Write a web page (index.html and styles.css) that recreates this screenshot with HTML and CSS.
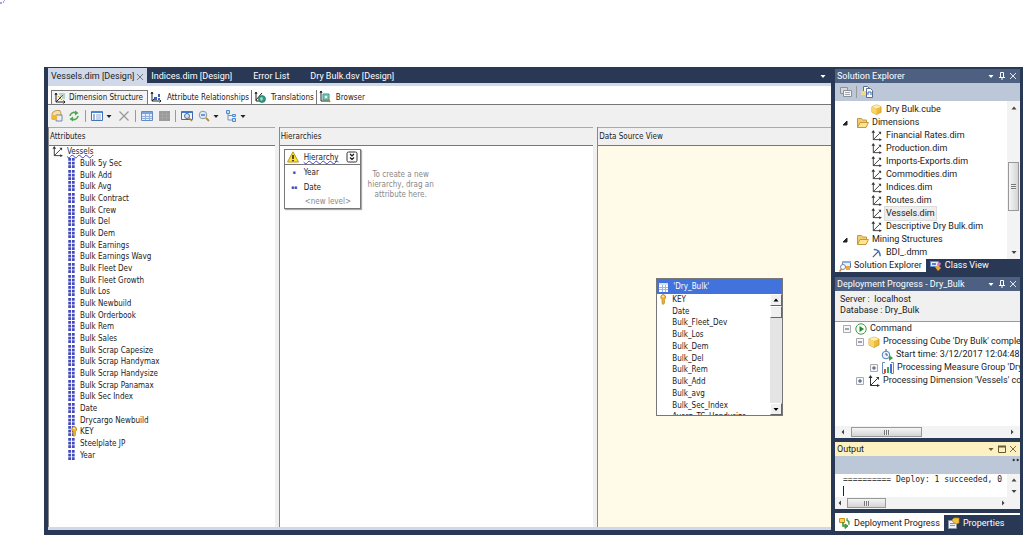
FILE: index.html
```html
<!DOCTYPE html>
<html lang="en">

<head>
    <meta charset="UTF-8">
    <meta name="viewport" content="width=device-width, initial-scale=1.0">
    <title>Vessels.dim [Design]</title>
    <link rel="stylesheet" href="styles.css">
</head>

<body>
    <!-- shared icons -->
    <svg class="sprite" aria-hidden="true">
        <symbol id="i-dim" viewBox="0 0 12 12">
            <path d="M2.500 2v8.500H10M2.500 10.500l7-7" fill="none" stroke="#333" />
            <path d="M2.500 0l2 3h-4zM12 10.500l-3 1.500V9zM11 2v3L8 2z" fill="#333" />
        </symbol>
        <symbol id="i-attr" viewBox="0 0 8 12">
            <path d="M1 0h3v3H1zM5 0h3v3H5zM1 4h3v3H1zM5 4h3v3H5zM1 8h3v3H1zM5 8h3v3H5z" fill="#4248bd" />
        </symbol>
        <symbol id="i-key" viewBox="0 0 8 12">
            <path d="M4 .5a3 3 0 0 1 1.500 5.500v4L4 11.500 3 10V6A3 3 0 0 1 4 .5z" fill="#f2b632" stroke="#b97a12" stroke-width=".8" />
            <circle cx="4" cy="2.500" r="1" fill="#fff3c0" />
        </symbol>
        <symbol id="i-structure" viewBox="0 0 12 12">
            <path d="M2 1v9h9M2 10l7-7M1 3l1-2 1 2M9.500 8.500L11 10l-1.500 1.500" fill="none" stroke="#222" />
            <path d="M5 2h6M6 4h5M8 6h3" stroke="#7fb0a0" />
            <path d="M4 4l4 4" stroke="#c89a40" />
        </symbol>
        <symbol id="i-relations" viewBox="0 0 12 12">
            <path d="M2 1v9h9M2 10l4-4M1 3l1-2 1 2M9.500 8.500L11 10l-1.500 1.500" fill="none" stroke="#222" />
            <path d="M4 6h3v3H4zM8 3h2v3H8zM8 7h2v2H8z" fill="#3c5fc6" />
        </symbol>
        <symbol id="i-translate" viewBox="0 0 12 12">
            <path d="M2 1v9h4M2 9l6-7M1 3l1-2 1 2" fill="none" stroke="#222" />
            <circle cx="8" cy="8" r="3.500" fill="#2e9c8c" stroke="#176455" stroke-width=".6" />
            <path d="M6 7l2-1 1 2-2 2z" fill="#aee3b0" />
        </symbol>
        <symbol id="i-browse" viewBox="0 0 12 12">
            <path d="M2 0v10h9M1 2l1-2 1 2" fill="none" stroke="#222" />
            <path d="M4 3h6v6H4z" fill="#9be0d4" stroke="#2b8f86" />
            <circle cx="7" cy="6" r="2" fill="#d6f6ee" stroke="#2b8f86" stroke-width=".6" />
            <path d="M9 8l2 3" stroke="#b08a20" stroke-width="1.500" />
        </symbol>
        <symbol id="i-process" viewBox="0 0 12 12">
            <path d="M2 2l3-1.500h4l1 3v6H1V4z" fill="#f6dfa0" stroke="#b68e3a" stroke-width=".8" />
            <path d="M5 5h6v6H5z" fill="#e9edf6" stroke="#5a6f9c" stroke-width=".8" />
            <path d="M1 5h5v5H1z" fill="#f2b632" />
        </symbol>
        <symbol id="i-refresh" viewBox="0 0 12 12">
            <path d="M2 6a4 4 0 0 1 6-3M10 6a4 4 0 0 1-6 3" fill="none" stroke="#4fa552" stroke-width="1.600" />
            <path d="M7 .5L10.500 3 7 5.500zM5 6.500L1.500 9 5 11.500z" fill="#4fa552" />
        </symbol>
        <symbol id="i-list" viewBox="0 0 12 12">
            <path d="M.5 1.500h11v9H.5z" fill="#fff" stroke="#4472b8" />
            <path d="M1 1h10v2H1z" fill="#4b86d8" />
            <path d="M2 5h2M2 7h2M2 9h2" stroke="#3467bd" />
            <path d="M5 5h5M5 7h5M5 9h5" stroke="#8fa9d0" />
        </symbol>
        <symbol id="i-x" viewBox="0 0 12 12">
            <path d="M1.500 1.500l9 9M10.500 1.500l-9 9" stroke="currentColor" stroke-width="1.300" />
        </symbol>
        <symbol id="i-grid" viewBox="0 0 12 12">
            <path d="M.5 1.500h11v9H.5z" fill="#e5eefb" stroke="#668bc4" />
            <path d="M1 2h10v2H1z" fill="#79a4df" />
            <path d="M1 6.500h10M1 8.500h10M4.500 4v6M8.500 4v6" stroke="#8fb0de" />
        </symbol>
        <symbol id="i-gray" viewBox="0 0 12 12">
            <path d="M1 1h11v10H1z" fill="#9a9a9a" />
            <path d="M1 4.500h11M1 7.500h11M4.500 1v10M8.500 1v10" stroke="#a4a4a4" />
        </symbol>
        <symbol id="i-find" viewBox="0 0 12 12">
            <path d="M.5 1.500h11v8H.5z" fill="#f3f7fd" stroke="#3f69b5" />
            <path d="M1 1h10v2H1z" fill="#3f78cf" />
            <circle cx="6" cy="6" r="2.500" fill="#cfe4fa" stroke="#5c6b80" />
            <path d="M8 8l3 3" stroke="#b6862a" stroke-width="1.600" />
        </symbol>
        <symbol id="i-zoom" viewBox="0 0 12 12">
            <circle cx="5" cy="5" r="3.800" fill="#dcebfb" stroke="#8a97a8" />
            <path d="M3 5h4" stroke="#3a66ad" stroke-width="1.300" />
            <path d="M8 8l3 3" stroke="#c08a2c" stroke-width="1.800" />
        </symbol>
        <symbol id="i-layout" viewBox="0 0 12 12">
            <path d="M3 3v7h4M3 5.500h4" fill="none" stroke="#6b94c9" />
            <path d="M1.500.5h3v3h-3zM7.500 4.500h3v2h-3zM7.500 8.500h3v3h-3z" fill="#c9e1fb" stroke="#4d8bd0" />
        </symbol>
        <symbol id="i-warn" viewBox="0 0 12 12">
            <path d="M6 .8L11.500 11H.5z" fill="#ffe033" stroke="#b89b10" stroke-linejoin="round" />
            <path d="M6 4v4M6 9v1.300" stroke="#111" stroke-width="1.400" />
        </symbol>
        <symbol id="i-collapse" viewBox="0 0 12 12">
            <rect x="1" y="1" width="10" height="10" rx="1.500" fill="#fff" stroke="#333" />
            <path d="M4 3l2 2 2-2M4 6.500l2 2 2-2" fill="none" stroke="#111" stroke-width="1.200" />
        </symbol>
        <symbol id="i-table" viewBox="0 0 12 12">
            <path d="M2 2h9v9H2z" fill="#fff" />
            <path d="M2 2h9v2H2z" fill="#d5e1fa" />
            <path d="M2 6.500h9M2 8.500h9M5.500 4v7M8.500 4v7" stroke="#9cb5ea" />
        </symbol>
        <symbol id="i-cube" viewBox="0 0 12 12">
            <path d="M6 1l5 2v6l-5 2.500L1 9V3z" fill="#f0bb3a" stroke="#c08a22" stroke-width=".7" />
            <path d="M6 1l5 2-5 2-5-2z" fill="#fff0b0" />
            <path d="M6 5v6.500L1 9V3z" fill="#f9d566" />
        </symbol>
        <symbol id="i-folder" viewBox="0 0 12 12">
            <path d="M.5 10.500v-9h4l1 1.500h4v3" fill="#f2cf6c" stroke="#c29a42" />
            <path d="M.5 10.500l2.500-5h8.500l-2.500 5z" fill="#ffe48e" stroke="#c29a42" />
        </symbol>
        <symbol id="i-mining" viewBox="0 0 12 12">
            <path d="M2 11l7-7" stroke="#555" stroke-width="1.200" />
            <path d="M3 3c3-1 7 2 7 7" fill="none" stroke="#3e75bf" stroke-width="1.600" />
        </symbol>
        <symbol id="i-props" viewBox="0 0 12 12">
            <path d="M.5 1.500h7v6h-7z" fill="#d7d9dd" stroke="#8b9099" />
            <path d="M3.500 4.500h8v6h-8z" fill="#f5f6f8" stroke="#8b9099" />
            <path d="M5 6.500h5M5 8.500h5" stroke="#a3a8b0" />
        </symbol>
        <symbol id="i-files" viewBox="0 0 12 12">
            <path d="M2.500.5h4l2 2v6h-6z" fill="#fff" stroke="#586c8e" />
            <path d="M5.500 2.500h4l2 2v7h-6z" fill="#fff" stroke="#586c8e" />
            <path d="M0 5h5v4H0z" fill="#f5d98a" />
            <path d="M7 9V6h3v3" fill="none" stroke="#2e66b8" />
        </symbol>
        <symbol id="i-solution" viewBox="0 0 12 12">
            <path d="M3.500 1.500h8v6h-8z" fill="#e8eefb" stroke="#5877b4" />
            <path d="M3 1h9v2H3z" fill="#8fadd9" />
            <circle cx="4" cy="7" r="2.500" fill="#fff" stroke="#7385a2" />
            <path d="M2.500 9l-2 2.500" stroke="#c58a28" stroke-width="1.500" />
            <path d="M7 6h4v4H7z" fill="#e8a83c" />
        </symbol>
        <symbol id="i-class" viewBox="0 0 12 12">
            <path d="M.5 1.500h8v5h-8z" fill="#e4edff" stroke="#6d8bd0" />
            <path d="M2 4h4" stroke="#2f5dc4" stroke-width="1.500" />
            <path d="M5 7l3-2 3 3-3 3z" fill="#f3a53c" />
            <path d="M8 2l3 1-1 3-3-1z" fill="#d777c9" />
        </symbol>
        <symbol id="i-play" viewBox="0 0 12 12">
            <circle cx="6" cy="6" r="5.200" fill="#fff" stroke="#3f9a42" />
            <path d="M4.500 3l4.500 3-4.500 3z" fill="#208a2c" />
        </symbol>
        <symbol id="i-time" viewBox="0 0 12 12">
            <circle cx="5" cy="6" r="3.800" fill="#eaf3ff" stroke="#4c80bb" />
            <path d="M5 4v2h2M4 1h2" fill="none" stroke="#345a8c" />
            <path d="M8 6l4 3-4 3z" fill="#37a33e" />
        </symbol>
        <symbol id="i-measure" viewBox="0 0 12 12">
            <path d="M3 .5H.5v11H3M9 .5h2.500v11H9" fill="none" stroke="#6e8cba" />
            <path d="M2 7h2v4H2z" fill="#db4f3b" />
            <path d="M5 5h2v6H5z" fill="#47a94a" />
            <path d="M8 2h2v9H8z" fill="#3c72d2" />
        </symbol>
        <symbol id="i-deploy" viewBox="0 0 12 12">
            <path d="M.5 1.500h5v4h-5z" fill="#ffd45c" stroke="#d38f1b" />
            <path d="M4 5v4h3" fill="none" stroke="#35943a" stroke-width="1.500" />
            <path d="M6 7l3 2-3 2.500zM8 1v3h2v4" fill="#4aa84c" stroke="#35943a" />
        </symbol>
        <symbol id="i-hand" viewBox="0 0 12 12">
            <path d="M.5 3.500h8v8h-8z" fill="#eef1f7" stroke="#8a94a8" />
            <path d="M2 6.500h5M2 8.500h5" stroke="#7a8db5" />
            <path d="M4 3l2-2h5v5l-3 1-3-2z" fill="#f5c33b" stroke="#b78821" stroke-width=".7" />
        </symbol>
        <symbol id="i-pin" viewBox="0 0 8 8">
            <path d="M2.500 5V.5h3V5M1 5.500h6M4 5.500V8" fill="none" stroke="currentColor" />
        </symbol>
        <symbol id="i-max" viewBox="0 0 8 8">
            <path d="M.5 1.500h7v6h-7zM0 1h8v1H0z" fill="none" stroke="currentColor" />
        </symbol>
        <symbol id="i-down" viewBox="0 0 8 8">
            <path d="M1.500 3h5L4 6z" fill="currentColor" />
        </symbol>
        <symbol id="i-up" viewBox="0 0 8 8">
            <path d="M1.500 5.500h5L4 2.500z" fill="currentColor" />
        </symbol>
        <symbol id="i-left" viewBox="0 0 8 8">
            <path d="M5 1.500v5L2.500 4z" fill="currentColor" />
        </symbol>
        <symbol id="i-right" viewBox="0 0 8 8">
            <path d="M3 1.500v5L5.500 4z" fill="currentColor" />
        </symbol>
        <symbol id="i-plus" viewBox="0 0 8 8">
            <path d="M.5.5h7v7h-7z" fill="#f7f7f7" stroke="#aaa" />
            <path d="M2 4h4M4 2v4" stroke="#34518c" />
        </symbol>
        <symbol id="i-minus" viewBox="0 0 8 8">
            <path d="M.5.5h7v7h-7z" fill="#f7f7f7" stroke="#aaa" />
            <path d="M2 4h4" stroke="#34518c" />
        </symbol>
        <symbol id="i-open" viewBox="0 0 8 8">
            <path d="M6 2v4H2z" fill="#222" stroke="#222" />
        </symbol>
        <symbol id="i-grip" viewBox="0 0 8 8">
            <path d="M1 1l2 1-2 1zM5 1l2 1-2 1z" fill="#222" stroke="#222" stroke-width=".5" />
        </symbol>
    </svg>

    <svg class="ink" viewBox="0 0 6 4" aria-hidden="true"><path d="M0 3h2M3 2h1M4 0h1" stroke="#4a3fe0" /></svg>

    <div class="ide">
        <main class="editor">
            <nav class="doc-tabs">
                <button class="doc-tab active">Vessels.dim [Design] <svg class="s8"><use href="#i-x" /></svg></button>
                <button class="doc-tab">Indices.dim [Design]</button>
                <button class="doc-tab">Error List</button>
                <button class="doc-tab">Dry Bulk.dsv [Design]</button>
                <button class="more" aria-label="Documents"><svg class="s8"><use href="#i-down" /></svg></button>
            </nav>
            <nav class="view-tabs">
                <button class="view-tab active"><svg class="s12"><use href="#i-structure" /></svg>Dimension Structure</button>
                <button class="view-tab"><svg class="s12"><use href="#i-relations" /></svg>Attribute Relationships</button>
                <button class="view-tab"><svg class="s12"><use href="#i-translate" /></svg>Translations</button>
                <button class="view-tab"><svg class="s12"><use href="#i-browse" /></svg>Browser</button>
            </nav>
            <div class="toolbar">
                <button aria-label="Process"><svg class="s12"><use href="#i-process" /></svg></button>
                <button aria-label="Refresh"><svg class="s12"><use href="#i-refresh" /></svg></button>
                <span class="sep"></span>
                <button class="drop" aria-label="View as"><svg class="s12"><use href="#i-list" /></svg><svg class="s8"><use href="#i-down" /></svg></button>
                <button class="off" aria-label="Delete"><svg class="s12"><use href="#i-x" /></svg></button>
                <span class="sep"></span>
                <button aria-label="Show table"><svg class="s12"><use href="#i-grid" /></svg></button>
                <button aria-label="Hide table"><svg class="s12"><use href="#i-gray" /></svg></button>
                <span class="sep"></span>
                <button aria-label="Find table"><svg class="s12"><use href="#i-find" /></svg></button>
                <button class="drop" aria-label="Zoom"><svg class="s12"><use href="#i-zoom" /></svg><svg class="s8"><use href="#i-down" /></svg></button>
                <button class="drop" aria-label="Layout"><svg class="s12"><use href="#i-layout" /></svg><svg class="s8"><use href="#i-down" /></svg></button>
            </div>
            <div class="panes">
                <section class="pane">
                    <h2>Attributes</h2>
                    <div class="pane-body">
                        <ul class="attrs">
                            <li class="root"><svg class="s11"><use href="#i-dim" /></svg><span class="wavy">Vessels</span></li>
                            <li><svg class="attr"><use href="#i-attr" /></svg>Bulk 5y Sec</li>
                            <li><svg class="attr"><use href="#i-attr" /></svg>Bulk Add</li>
                            <li><svg class="attr"><use href="#i-attr" /></svg>Bulk Avg</li>
                            <li><svg class="attr"><use href="#i-attr" /></svg>Bulk Contract</li>
                            <li><svg class="attr"><use href="#i-attr" /></svg>Bulk Crew</li>
                            <li><svg class="attr"><use href="#i-attr" /></svg>Bulk Del</li>
                            <li><svg class="attr"><use href="#i-attr" /></svg>Bulk Dem</li>
                            <li><svg class="attr"><use href="#i-attr" /></svg>Bulk Earnings</li>
                            <li><svg class="attr"><use href="#i-attr" /></svg>Bulk Earnings Wavg</li>
                            <li><svg class="attr"><use href="#i-attr" /></svg>Bulk Fleet Dev</li>
                            <li><svg class="attr"><use href="#i-attr" /></svg>Bulk Fleet Growth</li>
                            <li><svg class="attr"><use href="#i-attr" /></svg>Bulk Los</li>
                            <li><svg class="attr"><use href="#i-attr" /></svg>Bulk Newbuild</li>
                            <li><svg class="attr"><use href="#i-attr" /></svg>Bulk Orderbook</li>
                            <li><svg class="attr"><use href="#i-attr" /></svg>Bulk Rem</li>
                            <li><svg class="attr"><use href="#i-attr" /></svg>Bulk Sales</li>
                            <li><svg class="attr"><use href="#i-attr" /></svg>Bulk Scrap Capesize</li>
                            <li><svg class="attr"><use href="#i-attr" /></svg>Bulk Scrap Handymax</li>
                            <li><svg class="attr"><use href="#i-attr" /></svg>Bulk Scrap Handysize</li>
                            <li><svg class="attr"><use href="#i-attr" /></svg>Bulk Scrap Panamax</li>
                            <li><svg class="attr"><use href="#i-attr" /></svg>Bulk Sec Index</li>
                            <li><svg class="attr"><use href="#i-attr" /></svg>Date</li>
                            <li><svg class="attr"><use href="#i-attr" /></svg>Drycargo Newbuild</li>
                            <li class="keyed"><svg class="attr"><use href="#i-attr" /></svg><svg class="key-badge"><use href="#i-key" /></svg>KEY</li>
                            <li><svg class="attr"><use href="#i-attr" /></svg>Steelplate JP</li>
                            <li><svg class="attr"><use href="#i-attr" /></svg>Year</li>
                        </ul>
                    </div>
                </section>
                <section class="pane">
                    <h2>Hierarchies</h2>
                    <div class="pane-body hierarchies">
                        <div class="hierarchy">
                            <div class="hierarchy-head"><svg class="s12"><use href="#i-warn" /></svg><span class="wavy">Hierarchy</span><button aria-label="Collapse"><svg class="s12"><use href="#i-collapse" /></svg></button></div>
                            <ol>
                                <li><i>▪</i>Year</li>
                                <li><i>▪▪</i>Date</li>
                                <li class="new">&lt;new level&gt;</li>
                            </ol>
                        </div>
                        <p>To create a new hierarchy, drag an attribute here.</p>
                    </div>
                </section>
                <section class="pane">
                    <h2>Data Source View</h2>
                    <div class="pane-body diagram">
                        <div class="entity">
                            <h3><svg class="s12"><use href="#i-table" /></svg>'Dry_Bulk'</h3>
                            <div class="entity-body">
                                <ul>
                                    <li class="pk"><svg class="attr"><use href="#i-key" /></svg>KEY</li>
                                    <li>Date</li>
                                    <li>Bulk_Fleet_Dev</li>
                                    <li>Bulk_Los</li>
                                    <li>Bulk_Dem</li>
                                    <li>Bulk_Del</li>
                                    <li>Bulk_Rem</li>
                                    <li>Bulk_Add</li>
                                    <li>Bulk_avg</li>
                                    <li>Bulk_Sec_Index</li>
                                    <li>Averg_TC_Handysize</li>
                                </ul>
                                <div class="classic-scroll">
                                    <button aria-label="Up"><svg class="s8"><use href="#i-up" /></svg></button>
                                    <span class="thumb"></span>
                                    <button class="last" aria-label="Down"><svg class="s8"><use href="#i-down" /></svg></button>
                                </div>
                            </div>
                        </div>
                    </div>
                </section>
            </div>
        </main>

        <aside class="side">
            <section class="tool solution">
                <h2><span>Solution Explorer</span><svg class="s8"><use href="#i-down" /></svg><svg class="s8"><use href="#i-pin" /></svg><svg class="s8"><use href="#i-x" /></svg></h2>
                <div class="tool-bar">
                    <button aria-label="Properties"><svg class="s12"><use href="#i-props" /></svg></button>
                    <span class="sep"></span>
                    <button aria-label="Show all files"><svg class="s12"><use href="#i-files" /></svg></button>
                </div>
                <div class="scroll-area">
                    <ul class="files">
                        <li class="leaf"><svg class="s11"><use href="#i-cube" /></svg><span>Dry Bulk.cube</span></li>
                        <li><svg class="s8"><use href="#i-open" /></svg><svg class="s12"><use href="#i-folder" /></svg><span>Dimensions</span></li>
                        <li class="leaf"><svg class="s11"><use href="#i-dim" /></svg><span>Financial Rates.dim</span></li>
                        <li class="leaf"><svg class="s11"><use href="#i-dim" /></svg><span>Production.dim</span></li>
                        <li class="leaf"><svg class="s11"><use href="#i-dim" /></svg><span>Imports-Exports.dim</span></li>
                        <li class="leaf"><svg class="s11"><use href="#i-dim" /></svg><span>Commodities.dim</span></li>
                        <li class="leaf"><svg class="s11"><use href="#i-dim" /></svg><span>Indices.dim</span></li>
                        <li class="leaf"><svg class="s11"><use href="#i-dim" /></svg><span>Routes.dim</span></li>
                        <li class="leaf selected"><svg class="s11"><use href="#i-dim" /></svg><span>Vessels.dim</span></li>
                        <li class="leaf"><svg class="s11"><use href="#i-dim" /></svg><span>Descriptive Dry Bulk.dim</span></li>
                        <li><svg class="s8"><use href="#i-open" /></svg><svg class="s12"><use href="#i-folder" /></svg><span>Mining Structures</span></li>
                        <li class="leaf"><svg class="s11"><use href="#i-mining" /></svg><span>BDI_.dmm</span></li>
                    </ul>
                    <div class="vscroll">
                        <svg class="s8"><use href="#i-up" /></svg>
                        <span class="thumb"></span>
                        <svg class="s8"><use href="#i-down" /></svg>
                    </div>
                </div>
                <nav class="tool-tabs">
                    <button class="active"><svg class="s12"><use href="#i-solution" /></svg>Solution Explorer</button>
                    <button><svg class="s12"><use href="#i-class" /></svg>Class View</button>
                </nav>
            </section>

            <section class="tool deployment">
                <h2><span>Deployment Progress - Dry_Bulk</span><svg class="s8"><use href="#i-down" /></svg><svg class="s8"><use href="#i-pin" /></svg><svg class="s8"><use href="#i-x" /></svg></h2>
                <p class="server">Server :&nbsp; localhost<br>Database : Dry_Bulk</p>
                <ul class="progress">
                    <li><svg class="s8"><use href="#i-minus" /></svg><svg class="s12"><use href="#i-play" /></svg>Command</li>
                    <li class="l1"><svg class="s8"><use href="#i-minus" /></svg><svg class="s12"><use href="#i-cube" /></svg>Processing Cube 'Dry Bulk' completed</li>
                    <li class="l3"><svg class="s12"><use href="#i-time" /></svg>Start time: 3/12/2017 12:04:48 πμ</li>
                    <li class="l2"><svg class="s8"><use href="#i-plus" /></svg><svg class="s12"><use href="#i-measure" /></svg>Processing Measure Group 'Dry Bulk'</li>
                    <li class="l1"><svg class="s8"><use href="#i-plus" /></svg><svg class="s12"><use href="#i-dim" /></svg>Processing Dimension 'Vessels' completed</li>
                </ul>
                <div class="hscroll">
                    <svg class="s8"><use href="#i-left" /></svg>
                    <span class="thumb"></span>
                    <svg class="s8"><use href="#i-right" /></svg>
                </div>
            </section>

            <section class="tool output">
                <h2><span>Output</span><svg class="s8"><use href="#i-down" /></svg><svg class="s8"><use href="#i-max" /></svg><svg class="s8"><use href="#i-x" /></svg></h2>
                <div class="tool-bar"><svg class="s8"><use href="#i-grip" /></svg></div>
                <div class="scroll-area">
                    <pre>========== Deploy: 1 succeeded, 0 failed
<span class="caret"></span></pre>
                    <div class="vscroll">
                        <svg class="s8"><use href="#i-up" /></svg>
                        <svg class="s8"><use href="#i-down" /></svg>
                    </div>
                </div>
                <div class="hscroll short">
                    <svg class="s8"><use href="#i-left" /></svg>
                    <span class="thumb"></span>
                    <svg class="s8"><use href="#i-right" /></svg>
                </div>
            </section>

            <nav class="tool-tabs bottom">
                <button class="active"><svg class="s12"><use href="#i-deploy" /></svg>Deployment Progress</button>
                <button><svg class="s12"><use href="#i-hand" /></svg>Properties</button>
            </nav>
        </aside>
    </div>
</body>

</html>
```
FILE: styles.css
```css
* {
    box-sizing: border-box;
    padding: 0;
    margin: 0;
}

body {
    display: flex;
    flex-direction: column;
    height: 100vh;
    padding: 0 0 0 44px;
    background: #fff;
    color: #222;
    font-family: Roboto, "Noto Sans", sans-serif;
    font-size: 9px;
    line-height: 13px;
    overflow: hidden;
}

ul,
ol {
    list-style: none;
}

h2,
h3 {
    font-size: inherit;
    font-weight: normal;
}

button {
    display: flex;
    align-items: center;
    border: none;
    background: none;
    color: inherit;
    font: inherit;
    white-space: nowrap;
}

svg {
    display: block;
    flex: none;
}

.sprite {
    position: absolute;
    width: 0;
    height: 0;
}

.ink {
    position: absolute;
    left: 0;
    top: 0;
    width: 6px;
    height: 4px;
}

.s8 {
    width: 8px;
    height: 8px;
}

.s11 {
    width: 11px;
    height: 11px;
}

.s12 {
    width: 12px;
    height: 12px;
}

.wavy {
    text-decoration: underline wavy #4040e0 1px;
    text-decoration-skip-ink: none;
    text-underline-offset: 0;
}

.sep {
    width: 1px;
    height: 12px;
    background: #999;
}

.ide {
    display: flex;
    flex: 1;
    gap: 4px;
    min-height: 0;
    margin-top: 67px;
    padding-right: 3px;
    background: #293955;
}

/* document area */

.editor {
    display: flex;
    flex: 1;
    flex-direction: column;
    min-width: 0;
    padding: 0 0 5px 4px;
}

.doc-tabs {
    display: flex;
    height: 16px;
    padding-top: 1px;
    color: #fff;
}

.doc-tab {
    padding: 2px 3px 0;
    margin-right: 15px;
}

.doc-tab.active {
    gap: 2px;
    margin-right: 1px;
    background: #d0d9ea;
    color: #222;
}

.doc-tab.active svg {
    color: #667;
}

.more {
    margin-left: auto;
    padding-right: 4px;
}

.view-tabs {
    display: flex;
    height: 22px;
    padding: 4px 3px 0;
    border-top: 3px solid #d0d9ea;
    border-bottom: 1px solid #777;
    background: #fff;
    font-family: "DejaVu Sans Condensed", "DejaVu Sans", sans-serif;
    font-size: 8px;
}

.view-tab {
    gap: 5px;
    height: 14px;
    padding: 0 2px;
    border-right: 1px solid #777;
}

.view-tab:last-child {
    border: none;
}

.view-tab.active {
    gap: 3px;
    padding-right: 4px;
    border: 1px solid #777;
    border-bottom: none;
    background: #f4f4f4;
}

.toolbar {
    display: flex;
    align-items: center;
    gap: 5px;
    height: 22px;
    padding: 0 3px;
    background: #f0f0f0;
}

.toolbar .drop {
    gap: 2px;
}

.toolbar .off {
    color: #999;
}

.panes {
    display: grid;
    flex: 1;
    grid-template-columns: 227fr 315fr 234fr;
    gap: 4px;
    min-height: 0;
    border-bottom: 3px solid #d0d9ea;
    background: #f0f0f0;
    font-family: "DejaVu Sans Condensed", "DejaVu Sans", sans-serif;
    font-size: 8px;
}

.pane {
    display: flex;
    flex-direction: column;
    min-width: 0;
    border-left: 1px solid #888;
}

.pane h2 {
    height: 18px;
    padding: 2px 1px;
    border-top: 1px solid #aaa;
}

.pane-body {
    flex: 1;
    border-top: 1px solid #777;
    background: #fff;
}

.attrs {
    display: grid;
    grid-auto-rows: 1fr;
    height: 315px;
    line-height: 11px;
}

.attrs li {
    display: flex;
    align-items: center;
    gap: 5px;
    padding-left: 18px;
}

.attrs .root {
    gap: 4px;
    padding-left: 3px;
}

.attr,
.key-badge {
    width: 8px;
    height: 11px;
}

.keyed {
    position: relative;
}

.key-badge {
    position: absolute;
    left: 21px;
}

.hierarchies {
    display: flex;
    align-items: flex-start;
    gap: 4px;
    padding: 3px 4px;
}

.hierarchy {
    width: 77px;
    border: 1px solid #777;
    box-shadow: 1px 1px 1px #aaa;
}

.hierarchy-head {
    display: flex;
    align-items: center;
    gap: 5px;
    height: 15px;
    padding: 0 2px;
    border-bottom: 1px solid #777;
}

.hierarchy-head button {
    margin-left: auto;
}

.hierarchy li {
    display: flex;
    height: 15px;
    align-items: center;
}

.hierarchy i {
    width: 19px;
    color: #4248bd;
    font-size: 5px;
    font-style: normal;
    text-align: center;
}

.hierarchy .new {
    padding-left: 20px;
    height: 13px;
    color: #888;
}

.hierarchies p {
    width: 72px;
    padding-top: 21px;
    color: #888;
    line-height: 10px;
    text-align: center;
}

.diagram {
    position: relative;
    background: #fffbe8;
}

.entity {
    position: absolute;
    left: 58px;
    top: 132px;
    width: 127px;
    border: 1px solid #777;
    background: #fff;
}

.entity h3 {
    display: flex;
    align-items: center;
    gap: 4px;
    height: 15px;
    padding: 0;
    background: #4272db;
    color: #fff;
}

.entity-body {
    display: flex;
    align-items: flex-start;
    height: 121px;
    overflow: hidden;
}

.entity ul {
    display: grid;
    flex: 1;
    grid-auto-rows: 1fr;
    height: 129px;
    line-height: 11px;
}

.entity li {
    padding-left: 15px;
}

.entity .pk {
    display: flex;
    gap: 5px;
    padding-left: 2px;
}

.classic-scroll {
    display: flex;
    flex-direction: column;
    align-self: stretch;
    width: 12px;
    background: #e4e4e4;
}

.classic-scroll button,
.classic-scroll .thumb {
    justify-content: center;
    height: 12px;
    border: 1px solid #fff;
    border-right-color: #666;
    border-bottom-color: #666;
    background: #f0f0f0;
    color: #000;
}

.classic-scroll .last {
    margin-top: auto;
}

/* tool windows */

.side {
    display: flex;
    flex-direction: column;
    flex: 0 0 185px;
    min-width: 0;
    padding-top: 2px;
}

.tool {
    display: flex;
    flex-direction: column;
    min-width: 0;
}

.tool h2 {
    display: flex;
    align-items: center;
    gap: 3px;
    height: 14px;
    padding: 0 3px 0 2px;
    background: #4d6082;
    color: #fff;
}

.tool h2 span {
    flex: 1;
    white-space: nowrap;
}

.tool-bar {
    display: flex;
    align-items: center;
    gap: 4px;
    height: 18px;
    padding: 0 5px;
    background: #bcc7d8;
}

.scroll-area {
    display: flex;
    background: #fff;
}

.files {
    flex: 1;
    padding-top: 2px;
}

.files li {
    display: flex;
    align-items: center;
    gap: 2px;
    height: 13px;
    padding-left: 6px;
}

.files .s8 {
    margin-right: 6px;
}

.files .leaf {
    gap: 3px;
    padding-left: 36px;
}

.files span {
    padding: 0 1px;
}

.files .selected span {
    background: #eee;
    box-shadow: 0 0 0 1px #ddd;
}

.vscroll {
    display: flex;
    flex-direction: column;
    justify-content: space-between;
    align-items: center;
    width: 13px;
    padding: 3px 0;
    background: #f3f3f3;
    color: #444;
}

.vscroll .thumb {
    width: 11px;
    height: 49px;
    margin-top: 13px;
    border: 1px solid #999;
    background: repeating-linear-gradient(#777 0 1px, #eee 1px 2px) center / 5px 6px no-repeat, linear-gradient(90deg, #f5f5f5, #d4d4d4);
}

.tool-tabs {
    display: flex;
    height: 13px;
    color: #fff;
}

.tool-tabs button {
    gap: 3px;
    padding: 0 4px;
}

.tool-tabs .active {
    background: #fff;
    color: #222;
}

.deployment {
    margin-top: 5px;
}

.server {
    height: 30px;
    padding: 3px 5px;
    background: #f0f0f0;
    line-height: 11px;
}

.progress {
    height: 105px;
    padding: 0 0 0 8px;
    border-top: 1px solid #999;
    background: #fff;
    overflow: hidden;
}

.progress li {
    display: flex;
    align-items: center;
    gap: 3px;
    height: 13px;
    white-space: nowrap;
}

.progress .s8 {
    margin-right: 1px;
}

.progress .l1 {
    padding-left: 13px;
}

.progress .l2 {
    padding-left: 27px;
}

.progress .l3 {
    padding-left: 38px;
}

.hscroll {
    display: flex;
    align-items: center;
    height: 12px;
    padding: 0 4px;
    background: #f3f3f3;
    color: #444;
}

.hscroll .thumb {
    width: 71px;
    height: 10px;
    margin: 0 auto 0 4px;
    border: 1px solid #999;
    background: repeating-linear-gradient(90deg, #777 0 1px, #eee 1px 2px) center / 6px 5px no-repeat, linear-gradient(#f5f5f5, #d4d4d4);
}

.hscroll.short {
    padding: 0 13px 0 1px;
}

.hscroll.short .thumb {
    width: 39px;
    margin-left: 3px;
}

.output {
    margin-top: 4px;
}

.output h2 {
    background: #fdf1c2;
    color: #222;
}

.output h2 svg {
    color: #665a38;
}

.output .tool-bar {
    align-items: flex-start;
    justify-content: flex-end;
    padding: 2px 0;
}

.output .scroll-area {
    height: 23px;
}

.output pre {
    flex: 1;
    min-width: 0;
    padding-left: 8px;
    font-family: "DejaVu Sans Mono", monospace;
    font-size: 8px;
    line-height: 12px;
    overflow: hidden;
}

.output .vscroll {
    padding: 2px 0;
}

.caret {
    display: inline-block;
    height: 10px;
    border-left: 1px solid #222;
}

.bottom {
    height: 18px;
    margin-top: 4px;
    border-top: 2px solid #fff;
}
```
